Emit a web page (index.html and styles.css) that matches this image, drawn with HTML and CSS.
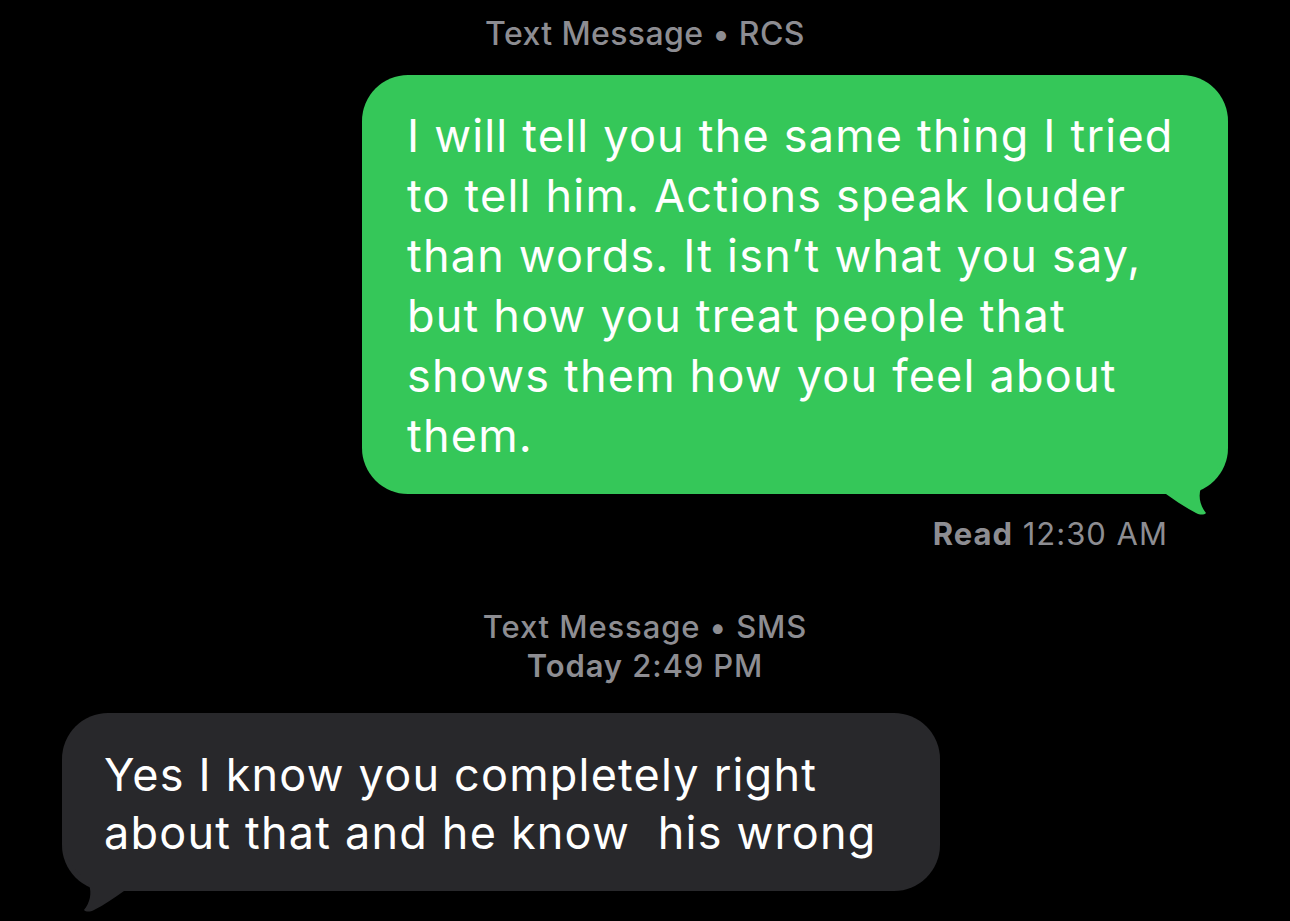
FILE: index.html
```html
<!DOCTYPE html>
<html lang="en">
<head>
  <meta charset="UTF-8" />
  <meta name="viewport" content="width=device-width, initial-scale=1" />
  <title>Messages</title>
  <link rel="stylesheet" href="styles.css">
</head>
<body>

  <main class="thread">
    <div class="stamp first">Text Message &bull; RCS</div>

    <div class="bubble sent">
      I will tell you the same thing I tried<br>
      to tell him. Actions speak louder<br>
      than words. It isn’t what you say,<br>
      but how you treat people that<br>
      shows them how you feel about<br>
      them.
      <svg class="tail" width="68" height="90" viewBox="0 0 68 90" aria-hidden="true">
        <path d="M68 0 L68 13 C68 40 46 52 41 62 C38 70 40 80 46 87 C44 89 40 89 36 87 C26 82 16 75 6 68 L0 68 L0 0 Z" />
      </svg>
    </div>

    <div class="receipt"><b>Read</b> 12:30 AM</div>

    <div class="stamp">
      Text Message &bull; SMS<br>
      <b>Today</b> 2:49 PM
    </div>

    <div class="bubble received">
      Yes I know you completely right<br>
      about that and he know &nbsp;his wrong
      <svg class="tail" width="68" height="90" viewBox="0 0 68 90" aria-hidden="true">
        <path d="M68 0 L68 13 C68 40 46 52 41 62 C38 70 40 80 46 87 C44 89 40 89 36 87 C26 82 16 75 6 68 L0 68 L0 0 Z" />
      </svg>
    </div>
  </main>

</body>
</html>
```

FILE: styles.css
```css
body {
  margin: 0;
  background: #000;
  font-family: Inter, 'Noto Sans', sans-serif;
  min-height: 100vh;
}

.thread {
  display: flex;
  flex-direction: column;
  padding: 15px 62px 0;
}

.stamp {
  align-self: center;
  text-align: center;
  color: #8d8d92;
  font-size: 31px;
  line-height: 39px;
  font-weight: 500;
  letter-spacing: 0.9px;
  margin-top: 54px;
}
.stamp.first {
  font-size: 32px;
  line-height: 38px;
  letter-spacing: 0.4px;
  margin-top: 0;
}
.stamp b {
  font-weight: 600;
}

.bubble {
  position: relative;
  isolation: isolate;
  box-sizing: border-box;
  color: #fff;
  font-size: 45px;
  line-height: 60px;
  letter-spacing: 1.2px;
  border-radius: 46px;
}
.bubble .tail {
  position: absolute;
  z-index: -1;
  bottom: -22px;
  right: 0;
}

.sent {
  align-self: flex-end;
  width: 866px;
  margin-top: 22px;
  padding: 31px 30px 28px 45px;
  background: #35c759;
}
.sent .tail path {
  fill: #35c759;
}

.received {
  align-self: flex-start;
  width: 878px;
  margin-top: 28px;
  padding: 33px 30px 29px 42px;
  line-height: 58px;
  background: #28282b;
}
.received .tail {
  right: auto;
  left: 0;
  transform: scaleX(-1);
}
.received .tail path {
  fill: #28282b;
}

.receipt {
  align-self: flex-end;
  margin: 21px 60px 0 0;
  color: #8d8d92;
  font-size: 31px;
  line-height: 38px;
  letter-spacing: 1px;
}
.receipt b {
  font-weight: 700;
}
```
